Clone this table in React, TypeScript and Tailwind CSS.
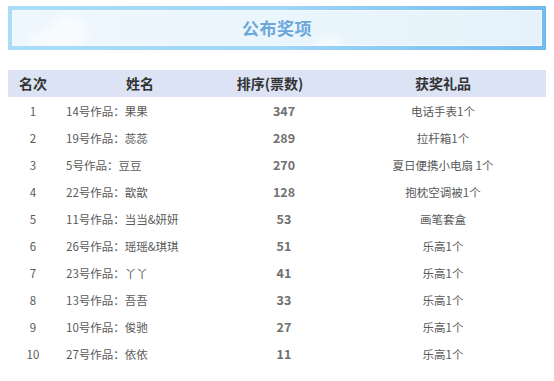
import React from "react";

const rows = [
  { r: "1", name: "14号作品：果果", v: "347", prize: "电话手表1个" },
  { r: "2", name: "19号作品：蕊蕊", v: "289", prize: "拉杆箱1个" },
  { r: "3", name: "5号作品：豆豆", v: "270", prize: "夏日便携小电扇 1个" },
  { r: "4", name: "22号作品：歆歆", v: "128", prize: "抱枕空调被1个" },
  { r: "5", name: "11号作品：当当&妍妍", v: "53", prize: "画笔套盒" },
  { r: "6", name: "26号作品：瑶瑶&琪琪", v: "51", prize: "乐高1个" },
  { r: "7", name: "23号作品：丫丫", v: "41", prize: "乐高1个" },
  { r: "8", name: "13号作品：吾吾", v: "33", prize: "乐高1个" },
  { r: "9", name: "10号作品：俊驰", v: "27", prize: "乐高1个" },
  { r: "10", name: "27号作品：依依", v: "11", prize: "乐高1个" },
];

const font = { fontFamily: '"Noto Sans CJK SC", "Noto Sans", sans-serif' };

export default function App() {
  return (
    <div className="w-[554px] h-[381px] bg-white overflow-hidden" style={font}>
      <div className="pt-[6px] pl-[8px] pr-[8px]">
        <div className="h-[44px] p-[4px] bg-gradient-to-r from-[#a9ddf8] via-[#9fd6f6] to-[#72bbef] relative overflow-hidden">
          <div className="h-full border border-[#f4faff] bg-gradient-to-r from-[#eef7fd] via-[#eaf5fc] to-[#e6f2fb] flex items-center justify-center relative overflow-hidden">
            <div className="absolute left-[35px] top-[4px] w-[40px] h-[40px] rounded-full bg-white/60 blur-[6px]" />
            <div className="absolute left-[15px] top-[20px] w-[30px] h-[20px] rounded-full bg-white/50 blur-[5px]" />
            <div className="absolute left-[300px] top-[26px] w-[30px] h-[16px] rounded-full bg-white/60 blur-[5px]" />
            <span className="relative text-[17px] font-bold text-[#6aa8dc] tracking-[0.5px]">公布奖项</span>
          </div>
        </div>
      </div>
      <div className="mt-[20px] mx-[8px]">
        <div className="h-[27px] bg-[#dbe3f4] flex items-center text-[14px] font-bold text-[#333]">
          <div className="w-[50px] text-center">名次</div>
          <div className="w-[164px] text-center">姓名</div>
          <div className="w-[96px] text-center">排序(票数)</div>
          <div className="flex-1 text-center pl-[22px]">获奖礼品</div>
        </div>
        <div className="mt-px">
          {rows.map((row) => (
            <div key={row.r} className="h-[27px] flex items-center text-[11.5px] text-[#5a5a5a]">
              <div className="w-[50px] text-center">{row.r}</div>
              <div className="w-[164px] pl-[8px]">{row.name}</div>
              <div className="w-[96px] pl-[28px] text-center text-[12.5px] font-bold text-[#707070]">{row.v}</div>
              <div className="flex-1 text-center pl-[22px]">{row.prize}</div>
            </div>
          ))}
        </div>
      </div>
    </div>
  );
}
